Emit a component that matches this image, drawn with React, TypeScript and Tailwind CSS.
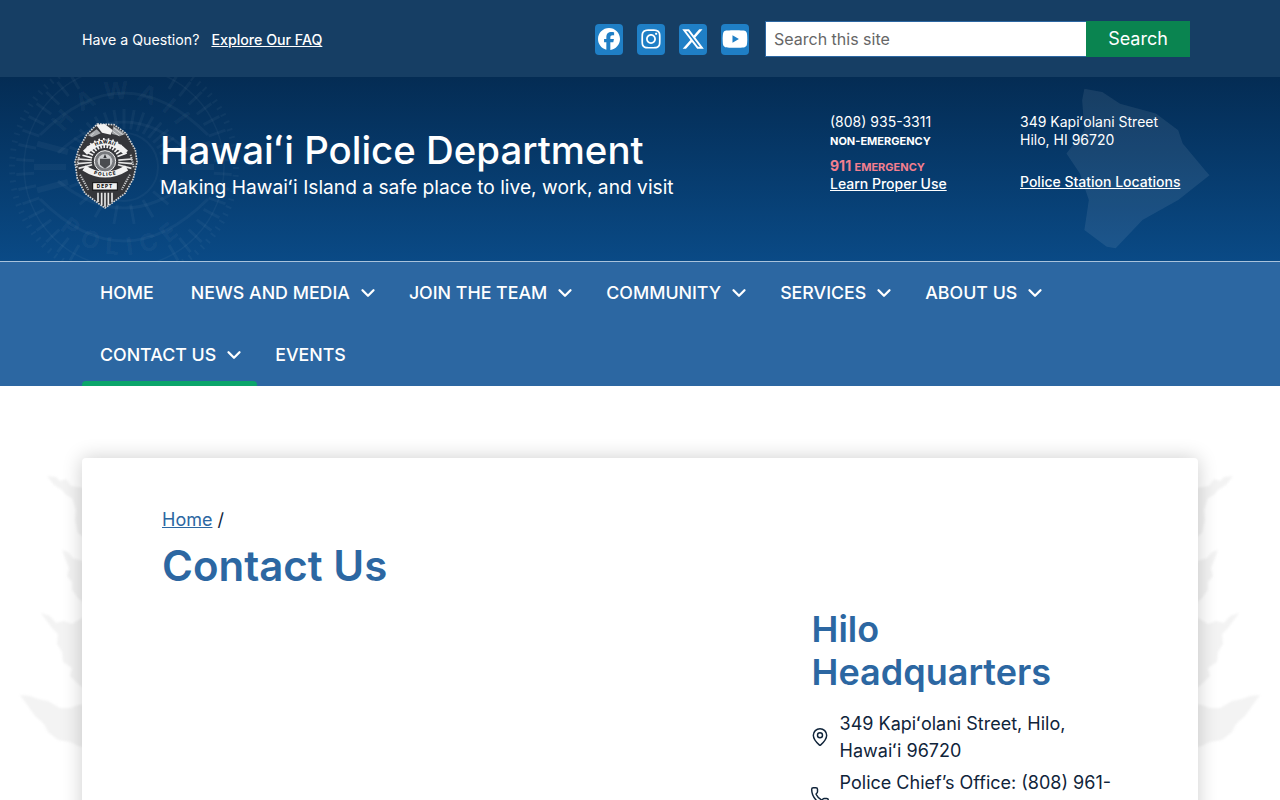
import { ChevronDown, MapPin, Phone } from "lucide-react";
import { FaFacebook, FaInstagram, FaXTwitter, FaYoutube } from "react-icons/fa6";

const navRows = [
  [
    { label: "HOME" },
    { label: "NEWS AND MEDIA", sub: true },
    { label: "JOIN THE TEAM", sub: true },
    { label: "COMMUNITY", sub: true },
    { label: "SERVICES", sub: true },
    { label: "ABOUT US", sub: true },
  ],
  [{ label: "CONTACT US", sub: true, active: true }, { label: "EVENTS" }],
];

// spokes for the badge drawings, cx/cy centre, r1..r2 length, from..to in degrees
function rays(cx: number, cy: number, r1: number, r2: number, from: number, to: number, step: number) {
  let d = "";
  for (let a = from; a <= to; a += step) {
    const c = Math.cos((a * Math.PI) / 180);
    const s = Math.sin((a * Math.PI) / 180);
    d += `M${(cx + c * r1).toFixed(1)} ${(cy + s * r1).toFixed(1)}L${(cx + c * r2).toFixed(1)} ${(cy + s * r2).toFixed(1)}`;
  }
  return d;
}

function Fern({ right }: { right?: boolean }) {
  return (
    <svg
      viewBox="0 0 100 320"
      className={`absolute top-[72px] w-[100px] h-[320px] blur-[1px] ${right ? "right-0 -scale-x-100" : "left-0"}`}
    >
      <g fill="#f3f3f3">
        <path d="M47 18L56 19L60 23L66 21L71 28L78 29L90 32V84L78 75L75 62L76 52L72 40L66 37L62 32L54 27Z" />
        <path d="M62 92L68 94L73 100L79 102L90 106V150L78 140L72 132L72 124L67 118L69 110L65 100Z" />
        <path d="M41 155L50 158L56 165L64 163L72 166L82 160L90 160V235L78 226L70 218L72 210L63 204L62 194L57 186L58 176L52 170L46 162Z" />
        <path d="M20 237L30 238L38 241L48 243L60 250L70 250L78 247L90 246V290L78 288L70 284L58 282L48 274L44 266L35 258L28 248Z" />
      </g>
    </svg>
  );
}

function Watermark() {
  return (
    <svg viewBox="0 0 250 184" className="absolute left-0 top-0 w-[250px] h-[184px]">
      <defs>
        <path id="wm-top" d="M55 90A68 68 0 0 1 191 90" />
        <path id="wm-bottom" d="M35 90A88 88 0 0 0 211 90" />
      </defs>
      <g fill="none" stroke="#fff" strokeOpacity="0.04">
        <circle cx="124" cy="90" r="112" strokeWidth="6" strokeDasharray="2 6" />
        <circle cx="124" cy="90" r="100" strokeWidth="1.5" />
        <path strokeWidth="3" d="M40 58Q124 -26 208 58M58 76Q124 14 190 76" />
        <path strokeWidth="3" d="M40 122Q124 206 208 122M58 104Q124 158 190 104" />
        <circle cx="124" cy="90" r="34" strokeWidth="2" />
        <path strokeWidth="3" d={rays(124, 90, 38, 58, 200, 340, 10)} />
        <path strokeWidth="3" d={rays(124, 90, 38, 58, 20, 160, 20)} />
        <path strokeWidth="6" d={rays(124, 90, 58, 90, 165, 195, 15)} />
        <path strokeWidth="6" d={rays(124, 90, 58, 90, -15, 15, 15)} />
        <path strokeWidth="3" d={rays(124, 90, 90, 108, 120, 240, 8)} />
        <path strokeWidth="3" d={rays(124, 90, 90, 108, -60, 60, 8)} />
      </g>
      <g fill="#fff" fillOpacity="0.055" fontFamily="Inter, sans-serif" fontSize="24" fontWeight="700" textAnchor="middle">
        <text letterSpacing="9">
          <textPath href="#wm-top" startOffset="50%">HAWAII</textPath>
        </text>
        <text letterSpacing="9">
          <textPath href="#wm-bottom" startOffset="50%">POLICE</textPath>
        </text>
      </g>
    </svg>
  );
}

function Badge() {
  return (
    <svg viewBox="0 0 210 276" className="w-[70px] h-[92px] shrink-0 -ml-[12px]">
      <defs>
        <path id="b-top" d="M45 104Q105 42 168 104" />
        <path id="b-bottom" d="M42 150Q105 190 170 150" />
      </defs>
      <path
        d="M82 18L132 20L168 46L196 96L201 132L190 182L165 226L125 256L105 270L85 256L45 226L22 182L15 132L25 96L50 50Z"
        fill="#35363a"
        stroke="#d0d2d4"
        strokeWidth="5"
        strokeDasharray="5 3"
      />
      <path d="M78 20L104 18L128 36L122 50L96 44Z" fill="#f2f2f2" />
      <path d="M130 24L166 48L150 54L126 48Z" fill="#a0a3a6" />
      <path d="M80 34L54 52L66 58L92 46Z" fill="#a8abae" />
      <path d="M132 30L158 50M126 38L148 54M72 44L62 54" stroke="#f0f0f0" strokeWidth="2" />
      <path d={rays(105, 130, 40, 70, 195, 345, 12)} stroke="#f2f2f2" strokeWidth="5" />
      <path d={rays(105, 130, 40, 82, 165, 185, 10)} stroke="#e6e6e6" strokeWidth="5" />
      <path d={rays(105, 130, 40, 82, -5, 15, 10)} stroke="#e6e6e6" strokeWidth="5" />
      <circle cx="105" cy="130" r="32" fill="#77797d" stroke="#f0f0f0" strokeWidth="3" />
      <circle cx="105" cy="130" r="22" fill="#c9cbce" />
      <path d="M90 122H120V140L105 152L90 140Z" fill="#4a4c50" />
      <path d="M105 108L110 120H100Z" fill="#34363a" />
      <path d="M45 104Q105 42 168 104" fill="none" stroke="#f2f2f2" strokeWidth="17" />
      <path d="M42 150Q105 190 170 150" fill="none" stroke="#f2f2f2" strokeWidth="17" />
      <path d="M28 110L20 150M182 110L192 150M30 170L55 215M180 170L155 215" stroke="#c4c6c8" strokeWidth="6" strokeDasharray="4 3" />
      <rect x="68" y="194" width="74" height="22" fill="#f0f0f0" stroke="#0d0d0e" strokeWidth="3" />
      <path d="M84 224V252M95 224V262M105 224V266M115 224V262M126 224V252" stroke="#e6e6e6" strokeWidth="5" />
      <g fill="#111214" fontFamily="Inter, sans-serif" fontWeight="800" textAnchor="middle">
        <text fontSize="14" letterSpacing="2"><textPath href="#b-top" startOffset="50%" dominantBaseline="middle">HAWAII</textPath></text>
        <text fontSize="14" letterSpacing="3"><textPath href="#b-bottom" startOffset="50%" dominantBaseline="middle">POLICE</textPath></text>
        <text x="105" y="210" fontSize="14" letterSpacing="3">DEPT</text>
      </g>
    </svg>
  );
}

export default function App() {
  return (
    <div className="relative h-screen overflow-hidden bg-white font-['Inter',sans-serif] text-[#10243a]">
      <div className="bg-[#163e64] h-[77px] pl-[82px] pr-[90px] flex items-center text-white">
        <div className="flex items-center gap-3 text-[14.2px] mt-[3px]">
          <span>Have a Question?</span>
          <a href="#" className="font-medium underline">Explore Our FAQ</a>
        </div>
        <div className="ml-auto flex items-center">
          <div className="flex gap-[14px] mr-[17px] mt-[1px]">
            <a href="#" className="w-[28px] h-[31px] rounded bg-[#1f7fc6] flex items-center justify-center"><FaFacebook className="w-[22px] h-[22px]" /></a>
            <a href="#" className="w-[28px] h-[31px] rounded bg-[#1f7fc6] flex items-center justify-center"><FaInstagram className="w-[22px] h-[22px]" /></a>
            <a href="#" className="w-[28px] h-[31px] rounded bg-[#1f7fc6] flex items-center justify-center"><FaXTwitter className="w-[24px] h-[24px]" /></a>
            <a href="#" className="w-[28px] h-[31px] rounded bg-[#1f7fc6] flex items-center justify-center"><FaYoutube className="w-[26px] h-[26px]" /></a>
          </div>
          <div className="flex items-center">
            <input
              placeholder="Search this site"
              className="w-[320px] h-[34px] bg-white shadow-[0_0_0_1px_#2c67a2] px-2 text-base text-[#333] placeholder:text-[#666] outline-none"
            />
            <button className="relative w-[104px] h-[36px] bg-[#0a8450] text-white text-lg">Search</button>
          </div>
        </div>
      </div>

      <header className="relative h-[184px] overflow-hidden bg-gradient-to-b from-[#042c54] to-[#0a4a86] text-white">
        <Watermark />
        <svg
          viewBox="1080 260 340 490"
          preserveAspectRatio="none"
          className="absolute left-[1062px] top-[10px] w-[152px] h-[163px]"
        >
          <path
            d="M1130 265L1170 275L1210 310L1290 340L1340 390L1350 430L1400 510L1410 525L1340 600L1260 660L1200 745L1180 740L1130 690L1140 600L1120 520L1090 460L1130 390L1125 300Z"
            fill="#fff"
            fillOpacity="0.08"
          />
        </svg>
        <div className="relative h-full pl-[82px] flex">
          <div className="flex items-start pt-[41px]">
            <Badge />
            <div className="ml-[20px] pt-[9px]">
              <h1 className="text-[38.4px] leading-[46px] font-medium">Hawaiʻi Police Department</h1>
              <p className="text-[19.2px] leading-[26px] mt-[1px]">Making Hawaiʻi Island a safe place to live, work, and visit</p>
            </div>
          </div>
          <div className="absolute left-[830px] top-[36px] text-sm leading-[18px]">
            <p>(808) 935-3311</p>
            <p className="text-[11px] font-bold mt-[1px]">NON-EMERGENCY</p>
            <p className="mt-[7px] text-[#f47f8f] font-bold">
              911 <span className="text-[11px]">EMERGENCY</span>
            </p>
            <a href="#" className="font-medium underline block -mt-[1px]">Learn Proper Use</a>
          </div>
          <div className="absolute left-[1020px] top-[36px] text-sm leading-[18px]">
            <p>349 Kapiʻolani Street</p>
            <p>Hilo, HI 96720</p>
            <a href="#" className="font-medium underline block mt-[24px]">Police Station Locations</a>
          </div>
        </div>
      </header>

      <nav className="bg-[#2c67a2] border-t border-[#a9c3dc] pl-[82px] text-white text-[17.8px] font-medium">
        {navRows.map((row, i) => (
          <div key={i} className="flex h-[62px]">
            {row.map((item) => (
              <a
                key={item.label}
                href="#"
                className={`relative flex items-center pl-[18px] ${item.sub ? "pr-[12px]" : "pr-[19px]"}`}
              >
                {item.label}
                {item.sub && <ChevronDown className="w-[22px] h-[22px] ml-[7px]" strokeWidth={2.5} />}
                {item.active && <span className="absolute left-0 right-0 bottom-0 h-[5px] rounded-t-sm bg-[#0ba56a]" />}
              </a>
            ))}
          </div>
        ))}
      </nav>

      <main className="relative px-[82px] pt-[72px]">
        <Fern />
        <Fern right />
        <div className="relative bg-white rounded-sm shadow-[0_0_20px_rgba(0,0,0,0.2)] px-[80px] pt-[48px] pb-16 h-[800px]">
          <p className="text-lg leading-[27px]">
            <a href="#" className="text-[#2c67a2] underline">Home</a> /
          </p>
          <h1 className="text-[42px] leading-[50px] font-semibold text-[#2c67a2] mt-[8px]">Contact Us</h1>
          <div className="flex mt-[17px]">
            <div className="w-[649.6px] shrink-0" />
            <div className="w-[300px]">
              <h2 className="text-[36px] leading-[43px] font-semibold text-[#2c67a2]">Hilo<br />Headquarters</h2>
              <ul className="mt-[16px] text-lg leading-[27px]">
                <li className="flex items-center gap-[10px] -ml-[2px]">
                  <MapPin className="w-5 h-5 shrink-0" strokeWidth={1.75} />
                  <span>349 Kapiʻolani Street, Hilo, Hawaiʻi 96720</span>
                </li>
                <li className="flex items-center gap-[10px] -ml-[2px] mt-[5px]">
                  <Phone className="w-5 h-5 shrink-0" strokeWidth={1.75} />
                  <span>Police Chief’s Office: (808) 961-8300</span>
                </li>
              </ul>
            </div>
          </div>
        </div>
      </main>
    </div>
  );
}
